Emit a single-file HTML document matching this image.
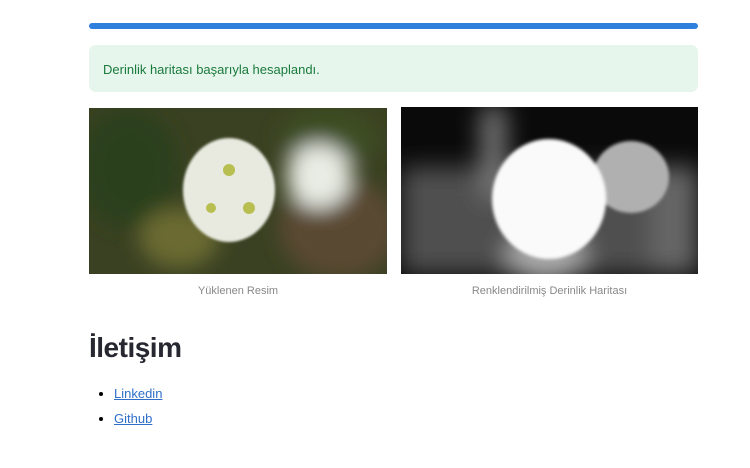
<!DOCTYPE html>
<html><head><meta charset="utf-8"><style>
body{margin:0;background:#fff;font-family:"Liberation Sans",sans-serif;width:750px;height:468px;overflow:hidden;position:relative}
.bar{position:absolute;left:89px;top:23px;width:609px;height:6px;border-radius:3px;background:#2f7fdd}
.alert{position:absolute;left:89px;top:45px;width:609px;height:47px;border-radius:7px;background:#e6f6ec;color:#1a7a3c;font-size:13px;line-height:49px;box-sizing:border-box;padding-left:14px}
.img{position:absolute;overflow:hidden}
.cap{position:absolute;top:285px;font-size:11px;color:#888;text-align:center}
h2{position:absolute;left:89px;top:332px;margin:0;font-size:28px;font-weight:bold;color:#262730;letter-spacing:-0.5px}
ul{position:absolute;left:89px;top:381px;margin:0;padding:0 0 0 25px;font-size:13px;line-height:25px}
a{color:#2f6fc8}
</style></head><body>
<div class="bar"></div>
<div class="alert">Derinlik haritası başarıyla hesaplandı.</div>
<div class="img" style="left:89px;top:108px;width:298px;height:166px;background:#3e4224">
<svg width="298" height="166"><defs><filter id="b"><feGaussianBlur stdDeviation="10"/></filter><filter id="s"><feGaussianBlur stdDeviation="1.2"/></filter></defs>
<rect width="298" height="166" fill="#3a4122"/>
<g filter="url(#b)"><ellipse cx="40" cy="60" rx="50" ry="60" fill="#2c3f1a"/><ellipse cx="250" cy="120" rx="60" ry="50" fill="#5a4a30"/><ellipse cx="90" cy="130" rx="40" ry="30" fill="#6a6a30"/><ellipse cx="240" cy="30" rx="50" ry="30" fill="#3d4d22"/><ellipse cx="230" cy="68" rx="32" ry="32" fill="#e8ece4"/></g>
<g filter="url(#s)"><ellipse cx="140" cy="82" rx="46" ry="52" fill="#e8eae0"/></g>
<circle cx="140" cy="62" r="6" fill="#b8bf50"/><circle cx="160" cy="100" r="6" fill="#b8bf50"/><circle cx="122" cy="100" r="5" fill="#b8bf50"/>
</svg></div>
<div class="img" style="left:401px;top:107px;width:297px;height:167px;background:#111">
<svg width="297" height="167"><defs><filter id="c"><feGaussianBlur stdDeviation="12"/></filter><filter id="d"><feGaussianBlur stdDeviation="1.5"/></filter></defs>
<rect width="297" height="167" fill="#0a0a0a"/>
<g filter="url(#c)"><rect x="0" y="60" width="297" height="107" fill="#505050"/><rect x="80" y="0" width="25" height="90" fill="#777"/><ellipse cx="145" cy="150" rx="40" ry="25" fill="#aaa"/><rect x="250" y="60" width="47" height="107" fill="#666"/></g>
<g filter="url(#d)"><ellipse cx="230" cy="70" rx="38" ry="36" fill="#b0b0b0"/><ellipse cx="148" cy="92" rx="57" ry="60" fill="#fafafa"/></g>
</svg></div>
<div class="cap" style="left:89px;width:298px">Yüklenen Resim</div>
<div class="cap" style="left:401px;width:297px">Renklendirilmiş Derinlik Haritası</div>
<h2>İletişim</h2>
<ul><li><a href="#">Linkedin</a></li><li><a href="#">Github</a></li></ul>
</body></html>
